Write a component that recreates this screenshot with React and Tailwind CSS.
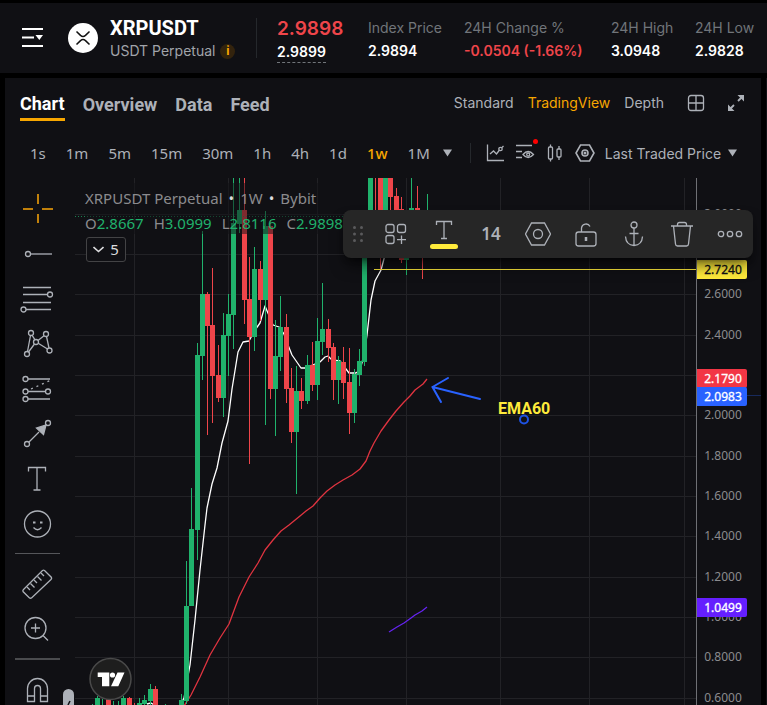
import React from "react";

const UP = "#20b26c";
const DOWN = "#ef454a";

// [body left, high, body top, body bottom, low, rising]
const CANDLES = [
  [90, 704, 706, 710, 710, 1],
  [95, 696, 698, 710, 710, 1],
  [100, 699, 706, 710, 710, 1],
  [106, 699, 699, 710, 710, 0],
  [111, 701, 706, 710, 710, 1],
  [116, 701, 706, 710, 710, 1],
  [121, 696, 698, 710, 710, 1],
  [127, 697, 698, 710, 710, 0],
  [132, 703, 706, 710, 710, 0],
  [137, 698, 703, 710, 710, 1],
  [142, 695, 700, 704, 710, 1],
  [148, 684, 689, 701, 710, 1],
  [153, 686, 689, 710, 710, 0],
  [163, 704, 706, 710, 710, 1],
  [179, 694, 700, 710, 710, 1],
  [184, 561, 606, 701, 704, 1],
  [189, 488, 529, 606, 606, 1],
  [195, 343, 355, 530, 560, 1],
  [200, 231, 294, 356, 380, 1],
  [205, 292, 294, 326, 435, 0],
  [210, 268, 325, 376, 423, 0],
  [216, 345, 375, 398, 402, 0],
  [221, 313, 335, 398, 417, 1],
  [226, 294, 314, 336, 376, 1],
  [231, 170, 223, 315, 349, 1],
  [237, 170, 210, 224, 233, 1],
  [242, 170, 210, 300, 324, 0],
  [247, 257, 299, 337, 464, 0],
  [252, 247, 269, 337, 351, 1],
  [258, 261, 269, 300, 321, 0],
  [263, 211, 226, 300, 425, 1],
  [268, 220, 226, 389, 399, 0],
  [273, 320, 356, 389, 436, 1],
  [278, 296, 327, 357, 371, 1],
  [284, 314, 327, 389, 403, 0],
  [289, 368, 388, 432, 443, 0],
  [294, 366, 391, 432, 494, 1],
  [299, 378, 391, 401, 409, 0],
  [305, 355, 365, 401, 404, 1],
  [310, 342, 365, 385, 391, 0],
  [315, 318, 341, 385, 400, 1],
  [320, 283, 329, 342, 355, 1],
  [326, 319, 329, 348, 362, 0],
  [331, 343, 347, 380, 400, 0],
  [336, 356, 361, 380, 404, 1],
  [341, 347, 362, 383, 399, 0],
  [347, 348, 382, 413, 434, 0],
  [352, 369, 374, 413, 423, 1],
  [357, 349, 361, 375, 386, 1],
  [362, 230, 240, 362, 366, 1],
  [368, 170, 170, 240, 245, 1],
  [373, 170, 215, 230, 240, 0],
  [378, 170, 170, 240, 270, 0],
  [383, 170, 170, 235, 245, 1],
  [388, 170, 170, 197, 230, 0],
  [394, 188, 196, 225, 240, 0],
  [399, 197, 209, 260, 263, 0],
  [404, 240, 250, 260, 275, 1],
  [409, 170, 208, 240, 250, 1],
  [415, 186, 208, 240, 250, 0],
  [420, 230, 240, 250, 279, 0],
  [425, 194, 220, 240, 250, 1],
];

const GRID_X = [134, 228, 317, 406, 500, 589, 684];
const PRICES = [
  ["3.0000", 214], ["2.8000", 254], ["2.6000", 294], ["2.4000", 335], ["2.2000", 375], ["2.0000", 415],
  ["1.8000", 456], ["1.6000", 496], ["1.4000", 536], ["1.2000", 577], ["1.0000", 617], ["0.8000", 657], ["0.6000", 698],
];
const TAGS = [
  ["2.1790", 369, "#f23645", "#ffffff"],
  ["2.0983", 387, "#2962ff", "#ffffff"],
  ["2.7240", 260, "#ffeb3b", "#101014"],
  ["1.0499", 598, "#651fff", "#ffffff"],
];

function PriceChart() {
  return (
    <svg
      className="block h-full w-full font-['Noto_Sans',sans-serif] text-[12px]"
      viewBox="75 178 686 527"
      preserveAspectRatio="xMinYMin slice"
      role="img"
      aria-label="XRPUSDT weekly candles"
    >
      <g fill="#222226">
        {GRID_X.map((x) => <rect key={x} x={x} y="178" width="1" height="527" />)}
        {PRICES.map(([p, y]) => <rect key={p} x="75" y={y} width="621" height="1" />)}
      </g>
      <g fill="none" strokeWidth="1.3" strokeLinejoin="round">
        <path stroke="#fff" d="M147 704L151 703L156 706M180 706L184 698L190 665L195 620L200 570L205 525L207 508L212 484L217 468L222 443L228 421L232 389L238 352L243 342L249 341L255 330L260 323L265 306L273 325L279 327L284 334L288 345L292 355L301 368L305 368L310 366L315 364L320 362L325 357L328 356L332 360L340 361L346 369L349 373L356 373L360 370L364 355L367 335L371 300L375 281L381 270L385 255L390 240" />
        <path stroke="#e03440" d="M184 706L191 695L200 677L210 655L220 638L229 624L239 597L249 577L258 563L265 550L273 540L281 531L289 525L300 516L306 511L313 506L320 498L327 491L335 485L343 480L352 475L360 469L366 461L370 451L374 443L381 431L389 420L396 411L404 402L410 396L415 390L423 384L427 379" />
        <path stroke="#6523f0" d="M389 632L397 627L404 623L411 618L415 615L422 611L427 607" />
      </g>
      <g shapeRendering="crispEdges">
        {CANDLES.map(([x, high, top, bottom, low, rising]) => (
          <g key={x} fill={rising ? UP : DOWN}>
            <rect x={x + 2} y={high} width="1" height={low - high} />
            <rect x={x} y={top} width="5" height={bottom - top} />
          </g>
        ))}
      </g>
      <path d="M75 216.5H696" stroke={UP} strokeDasharray="1 2" opacity="0.7" />
      <path d="M374 269.5H696" stroke="#ffeb3b" />
      <g fill="none" stroke="#2962ff" strokeWidth="2" strokeLinecap="round">
        <path d="M480 399L432.500 387M448 378L432.500 387L441 402" />
        <circle cx="524" cy="419.500" r="4" stroke="#1e53e5" />
      </g>
      <text x="498" y="414" fill="#ffeb3b" className="font-['Roboto',sans-serif] text-[16px] font-bold">EMA60</text>
      <rect x="696" y="178" width="1" height="527" fill="#6f7075" />
      <g fill="#8b8b8e" textAnchor="middle">
        {PRICES.filter(([p]) => p !== "2.2000" && p !== "2.8000").map(([p, y]) => (
          <text key={p} x="723" y={y + 4}>{p}</text>
        ))}
      </g>
      <rect x="747" y="395" width="14" height="1" fill="#182a5c" />
      {TAGS.map(([label, y, bg, fg]) => (
        <g key={label}>
          <path d={`M697 ${y}h48a2 2 0 0 1 2 2v15a2 2 0 0 1-2 2h-48z`} fill={bg} />
          <text x="723" y={y + 14} fill={fg} stroke={fg} strokeWidth="0.3" textAnchor="middle">{label}</text>
        </g>
      ))}
      <circle cx="110.500" cy="679" r="20.500" fill="#1e1e1e" stroke="#4a4a4a" strokeWidth="1.500" />
      <path fill="#fff" d="M97.700 672.500H109.300V686.300H102V677H97.700ZM117.500 672.500H124.500L118.300 686.300H111Z" />
      <circle cx="112.500" cy="675" r="2.600" fill="#fff" />
    </svg>
  );
}

function Icon({ size = 34, children, width = 1.3, className = "" }) {
  return (
    <svg width={size} height={size} viewBox={`0 0 ${size} ${size}`} fill="none" stroke="currentColor" strokeWidth={width} className={`shrink-0 ${className}`} aria-hidden="true">
      {children}
    </svg>
  );
}

const TextGlyph = () => <path d="M8.500 9.500V5.500H25.500V9.500M17 5.500V28M13.500 28H20.500" />;

const DRAW_TOOLS = [
  ["Crosshair", <g stroke="#c1810b" strokeWidth="2"><path d="M18 2V12M18 22V31M3 17H13M22 17H33" /></g>],
  ["Trend line", <><circle cx="8" cy="17" r="2.500" /><path d="M10.500 17H32" /></>],
  ["Fib retracement", <><path d="M3 5.500H31M3 12.500H27.500M3 20.500H31M6 27.500H31" /><circle cx="30" cy="12.500" r="2.500" /><circle cx="3.500" cy="27.500" r="2.500" /></>],
  ["Patterns", <><circle cx="11" cy="6" r="2.500" /><circle cx="26" cy="7" r="2.500" /><circle cx="16" cy="15" r="2.500" /><circle cx="7" cy="27" r="2.500" /><circle cx="29.500" cy="23.500" r="2.500" /><path d="M10.500 8.500L7.500 24.500M12 8.200L15 12.800M14.500 17L8.500 25M18 13.500L24 8.700M18.200 16.200L27.500 22M26.500 9.500L29 21" /></>],
  ["Forecast", <><circle cx="5.500" cy="7" r="2.500" /><circle cx="5.500" cy="19.500" r="2.500" /><circle cx="28" cy="19.500" r="2.500" /><circle cx="5.500" cy="27" r="2.500" /><path d="M8 7H30M8 19.500H25.500M8 27H30" /><path d="M11 17L30 8.500" strokeDasharray="2 4" /></>],
  ["Arrow", <><circle cx="7" cy="27" r="2.500" /><circle cx="28" cy="6" r="2.500" /><path d="M9 25L19 15" /><path d="M26 8L23.500 17.500L16.500 11Z" fill="currentColor" /></>],
  ["Text", <TextGlyph />],
  ["Emoji", <><circle cx="17.500" cy="17" r="13" /><path d="M13.500 20.500Q17.500 25 21.500 20.500" /><path d="M13 15.500H15.500M20 15.500H22.500" strokeWidth="2" /></>],
];

const TIMES = ["1s", "1m", "5m", "15m", "30m", "1h", "4h", "1d", "1w", "1M"];

function ToolButton({ label, children }) {
  return (
    <button aria-label={label} className="flex h-[45px] w-full shrink-0 items-center justify-center text-[#adb1b8]">
      {children}
    </button>
  );
}

function DrawingBar() {
  return (
    <div className="relative flex w-[70px] shrink-0 flex-col overflow-hidden pt-2 pr-[6px]">
      {DRAW_TOOLS.map(([label, glyph]) => (
        <ToolButton key={label} label={label}><Icon>{glyph}</Icon></ToolButton>
      ))}
      <div className="my-[7px] mr-[9px] ml-[10px] h-px shrink-0 bg-[#55565a]" />
      <ToolButton label="Measure">
        <Icon>
          <path d="M24.500 3.500L31.500 10.500Q32 11.500 31 12.500L11.500 31Q10.500 31.500 9.500 31L3 24.500Q2.500 23.500 3.500 22.500L22.500 3.500Q23.500 2.800 24.500 3.500Z" />
          <path d="M7 20L10 23M10.500 16.500L14.500 20.500M14 13L17 16M17.500 9.500L21.500 13.500M21 6L24 9" />
        </Icon>
      </ToolButton>
      <ToolButton label="Zoom in">
        <Icon><circle cx="15.500" cy="16" r="10.500" /><path d="M23 23.500L28 28.500M15.500 11.500V20.500M11 16H20" /></Icon>
      </ToolButton>
      <div className="my-[7px] mr-[9px] ml-[10px] h-[2px] shrink-0 bg-[#4a4b4e]" />
      <ToolButton label="Magnet">
        <Icon><path d="M7.500 28.500V15.500A10 10 0 0 1 27.500 15.500V28.500H20.500V15.500A3 3 0 0 0 14.500 15.500V28.500ZM7.500 23H14.500M20.500 23H27.500" /></Icon>
      </ToolButton>
      <svg className="absolute right-px bottom-0" width="11" height="16" viewBox="0 0 11 16" aria-hidden="true">
        <path d="M0 16V5.500A5.500 5.500 0 0 1 11 5.500V16Z" fill="#adb1b8" />
        <path d="M7 12L5 16" stroke="#101014" strokeWidth="1.500" />
      </svg>
    </div>
  );
}

function Quote({ label, value, tone = "text-white" }) {
  return (
    <div className="whitespace-nowrap">
      <div className="leading-[22px] text-[#71757a]">{label}</div>
      <div className={`leading-6 font-semibold ${tone}`}>{value}</div>
    </div>
  );
}

function Header() {
  return (
    <header className="flex h-[70px] shrink-0 items-center overflow-hidden bg-[#101014] pl-[22px]">
      <button aria-label="Markets" className="text-white">
        <svg width="22" height="22" viewBox="0 0 22 22" fill="none" stroke="currentColor" strokeWidth="2" aria-hidden="true">
          <path d="M0 2H21M0 10.500H12M0 19H21" />
          <path d="M13.500 8H21L17.300 13Z" fill="currentColor" stroke="none" />
        </svg>
      </button>
      <svg className="ml-6 shrink-0" width="30" height="30" viewBox="0 0 30 30" aria-hidden="true">
        <circle cx="15" cy="15" r="15" fill="#fff" />
        <path d="M8.500 8.500L12.500 12.400Q15 14.500 17.500 12.400L21.500 8.500M8.500 21.500L12.500 17.600Q15 15.500 17.500 17.600L21.500 21.500" fill="none" stroke="#111" strokeWidth="1.500" />
      </svg>
      <div className="ml-3 w-[146px] shrink-0 pt-[2px]">
        <h1 className="font-['Roboto',sans-serif] text-[20px] leading-6 font-bold text-white">XRPUSDT</h1>
        <div className="flex items-center gap-[5px] leading-[22px] whitespace-nowrap text-[#a1a4aa]">
          USDT Perpetual
          <span className="flex size-[15px] items-center justify-center rounded-full bg-[#33230d] text-[12px] font-bold text-[#f7a600]">i</span>
        </div>
      </div>
      <div className="h-10 w-px shrink-0 bg-[#25282c]" />
      <div className="ml-5 grid grid-cols-[91px_96px_147px_84px_auto] items-center pt-[3px]">
        <div>
          <div className="text-[19px] leading-6 font-semibold text-[#ef454a]">2.9898</div>
          <div className="inline-block border-b border-dashed border-[#71757a] leading-[20px] font-semibold text-white">2.9899</div>
        </div>
        <Quote label="Index Price" value="2.9894" />
        <Quote label="24H Change %" value="-0.0504 (-1.66%)" tone="text-[#ef454a]" />
        <Quote label="24H High" value="3.0948" />
        <Quote label="24H Low" value="2.9828" />
      </div>
    </header>
  );
}

function TabBar() {
  return (
    <nav className="flex h-[52px] shrink-0 items-center pr-[15px] pl-[15px] text-[#adb1b8]">
      <div className="flex items-center gap-[18px] font-['Roboto',sans-serif] text-[18px] font-bold">
        <button className="relative leading-6 text-white">
          Chart
          <span className="absolute -bottom-[5px] left-0 h-[3px] w-full bg-[#f7a600]" />
        </button>
        <button>Overview</button>
        <button>Data</button>
        <button>Feed</button>
      </div>
      <div className="ml-auto flex items-center gap-[14px] pb-[2px] leading-6">
        <button>Standard</button>
        <button className="text-[#f7a600]">TradingView</button>
        <button>Depth</button>
      </div>
      <button aria-label="Layout" className="ml-[22px] pb-[3px]">
        <Icon size={20}><rect x="2.500" y="2.500" width="15" height="15" rx="2.500" /><path d="M10 2.500V17.500M2.500 10H17.500" /></Icon>
      </button>
      <button aria-label="Full screen" className="ml-5 pb-[3px]">
        <Icon size={20} width={1.8}>
          <path d="M12 8L17 3M8 12L3 17" />
          <path d="M11.500 2H18V8.500ZM2 11.500V18H8.500Z" fill="currentColor" stroke="none" />
        </Icon>
      </button>
    </nav>
  );
}

const Caret = () => (
  <svg width="9" height="8" viewBox="0 0 9 8" className="shrink-0" aria-hidden="true"><path d="M0 0.500H9L4.500 7.500Z" fill="#adb1b8" /></svg>
);

function TimeBar() {
  return (
    <div className="mb-[2px] flex h-[46px] shrink-0 items-center pl-[25px] text-[#adb1b8]">
      <div className="flex items-center gap-5 font-['Noto_Sans',sans-serif] text-[15px]">
        {TIMES.map((t) => (
          <button key={t} className={t === "1w" ? "font-medium text-[#f7a600]" : ""}>{t}</button>
        ))}
      </div>
      <button aria-label="More intervals" className="ml-[13px]"><Caret /></button>
      <div className="ml-[18px] h-5 w-px bg-[#25282c]" />
      <div className="ml-[14px] flex items-center gap-[10px]">
        <button aria-label="Chart type">
          <Icon size={20}><path d="M2.500 1.500V17.500H19M5 11L8.500 8L11.500 11L14.500 7" /><circle cx="15.500" cy="6" r="1.700" /><path d="M17 4.500L18.500 3" /></Icon>
        </button>
        <button aria-label="Indicators" className="relative">
          <Icon size={20}><path d="M1 2.500H17M1 8.500H7M1 14.500H7M8 11.500Q13 5.500 18.500 11.500Q13 17.500 8 11.500Z" /><circle cx="13.200" cy="11.500" r="1.500" /></Icon>
          <span className="absolute -top-[4px] -right-[3px] size-[5px] rounded-full bg-[#ff0000]" />
        </button>
        <button aria-label="Candles">
          <Icon size={20}><rect x="3.500" y="4" width="4" height="12" rx="1" /><path d="M5.500 1.500V4M5.500 16V18.500M14 3V6M14 14V17" /><rect x="12" y="6" width="4" height="8" rx="1" /></Icon>
        </button>
        <button aria-label="Settings">
          <Icon size={20} width={1.6}><path d="M5.500 2H14.500L19 10L14.500 18H5.500L1 10Z" /><circle cx="10" cy="10" r="3" /><circle cx="10" cy="10" r="0.700" /></Icon>
        </button>
      </div>
      <label className="ml-[10px] flex items-center gap-[6px]">
        <select aria-label="Price source" className="appearance-none bg-transparent">
          <option>Last Traded Price</option>
        </select>
        <Caret />
      </label>
    </div>
  );
}

function Legend() {
  return (
    <div className="absolute top-[5px] left-[10px] font-['Noto_Sans',sans-serif] text-[15px] whitespace-nowrap text-[#8b8b8e]">
      <div className="bg-[#101014]/50">
        <div className="flex gap-[6px] leading-[30px]">
          <span>XRPUSDT Perpetual</span>
          <span className="text-[#dcdcde]">•</span>
          <span>1W</span>
          <span className="text-[#dcdcde]">•</span>
          <span>Bybit</span>
        </div>
        <div className="flex gap-[10px] leading-[21px]">
          {["O2.8667", "H3.0999", "L2.8116", "C2.9898"].map((v) => (
            <span key={v}>{v[0]}<span className="text-[#20b26c]">{v.slice(1)}</span></span>
          ))}
        </div>
      </div>
      <button className="mt-[3px] ml-px flex h-[25px] w-10 items-center justify-center gap-[6px] rounded-[3px] border border-[#434345] bg-[#101014] text-[#dcdcde]">
        <svg width="11" height="7" viewBox="0 0 11 7" fill="none" stroke="currentColor" strokeWidth="1.600" aria-hidden="true"><path d="M0.500 1L5.500 5.500L10.500 1" /></svg>
        5
      </button>
    </div>
  );
}

function DrawingOptions() {
  const cell = "flex h-12 w-12 shrink-0 items-center justify-center";
  return (
    <div className="absolute top-8 right-2 flex w-[410px] items-center rounded-lg bg-[#262626] text-[#adb1b8] shadow-lg shadow-black/60">
      <svg className="ml-[9px] shrink-0" width="12" height="18" viewBox="0 0 12 18" fill="#5a5a5c" aria-hidden="true">
        {[2.5, 9, 15.5].map((y) => <g key={y}><circle cx="2.500" cy={y} r="1.500" /><circle cx="9.500" cy={y} r="1.500" /></g>)}
      </svg>
      <div className="ml-2 flex">
        <button aria-label="Templates" className={cell}>
          <Icon size={24}><rect x="2" y="2.500" width="8" height="8" rx="2" /><rect x="13.500" y="2.500" width="8" height="8" rx="2" /><rect x="2" y="13.500" width="8" height="8" rx="2" /><path d="M17.500 13.500V22M13 17.700H22" /></Icon>
        </button>
        <button aria-label="Text colour" className={`${cell} flex-col gap-1`}>
          <Icon size={20}><path d="M2.500 5V1.500H17.500V5M10 1.500V18.500M7 18.500H13" /></Icon>
          <span className="h-[5px] w-7 rounded-full bg-[#ffeb3b]" />
        </button>
        <button className="flex h-12 w-[46px] shrink-0 items-center justify-center font-['Noto_Sans',sans-serif] text-[17px] font-semibold">14</button>
        <button aria-label="Settings" className={cell}>
          <Icon size={26}><path d="M6.500 2H19.500L25.500 13L19.500 24H6.500L0.500 13Z" /><circle cx="13" cy="13" r="4.500" /></Icon>
        </button>
        <button aria-label="Lock" className={cell}>
          <Icon size={26}><rect x="3" y="11" width="20" height="14" rx="2.500" /><path d="M8.500 11V7A4.500 4.500 0 0 1 17 5.500" /><path d="M13 16V20" strokeWidth="2.500" /></Icon>
        </button>
        <button aria-label="Anchor" className={cell}>
          <Icon size={26}><circle cx="13" cy="4" r="3" /><path d="M13 7V24.500M8.500 12.500H17.500M4.500 15.500Q5 24 13 24.500Q21 24 21.500 15.500" /></Icon>
        </button>
        <button aria-label="Delete" className={cell}>
          <Icon size={26}><path d="M2 5H24M4.500 5L6.500 23Q6.700 25 8.500 25H17.500Q19.300 25 19.500 23L21.500 5M8.500 5V3.500Q8.500 1.500 10.500 1.500H15.500Q17.500 1.500 17.500 3.500V5" /></Icon>
        </button>
        <button aria-label="More" className={cell}>
          <Icon size={26}><circle cx="4" cy="13" r="2.700" /><circle cx="13" cy="13" r="2.700" /><circle cx="22" cy="13" r="2.700" /></Icon>
        </button>
      </div>
    </div>
  );
}

export default function App() {
  return (
    <div className="flex h-screen flex-col overflow-hidden bg-black pt-[3px] font-['Inter',sans-serif] text-[14px]">
      <Header />
      <div className="mt-[5px] flex min-h-0 flex-1 gap-[5px] pl-[5px]">
        <main className="flex min-w-0 flex-1 flex-col bg-[#101014]">
          <TabBar />
          <TimeBar />
          <section className="flex min-h-0 flex-1">
            <DrawingBar />
            <div className="relative min-w-0 flex-1">
              <PriceChart />
              <Legend />
              <DrawingOptions />
            </div>
          </section>
        </main>
        <div className="w-px bg-[#101014]" />
      </div>
    </div>
  );
}
